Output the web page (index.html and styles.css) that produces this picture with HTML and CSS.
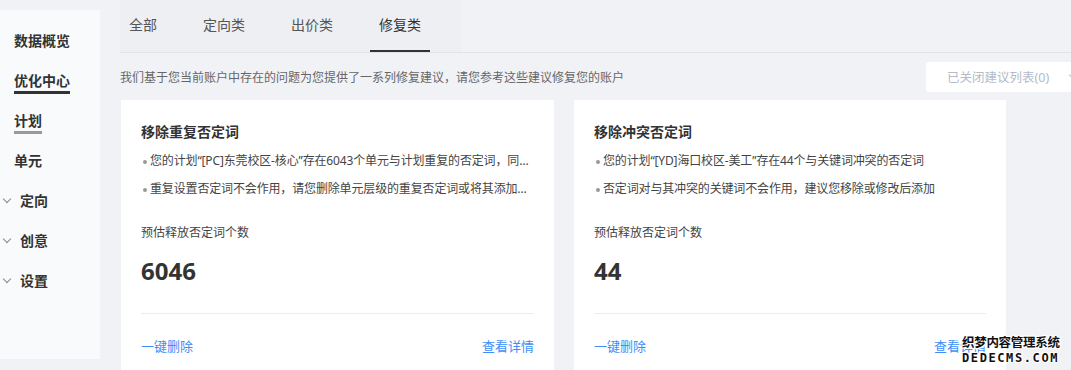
FILE: index.html
```html
<!DOCTYPE html>
<html lang="zh-CN">
<head>
    <meta charset="UTF-8">
    <meta name="viewport" content="width=device-width, initial-scale=1.0">
    <title>优化中心 - 修复类</title>
    <link rel="stylesheet" href="styles.css">
</head>
<body>
    <div class="page">
        <div class="sidebar">
            <div class="nav-item">数据概览</div>
            <div class="nav-item"><span class="mark mark-dark">优化中心</span></div>
            <div class="nav-item"><span class="mark mark-gray">计划</span></div>
            <div class="nav-item">单元</div>
            <div class="nav-item nav-fold"><span class="chev"></span>定向</div>
            <div class="nav-item nav-fold"><span class="chev"></span>创意</div>
            <div class="nav-item nav-fold"><span class="chev"></span>设置</div>
        </div>

        <div class="main">
            <div class="tab-bar">
                <div class="tabs">
                    <div class="tab">全部</div>
                    <div class="tab">定向类</div>
                    <div class="tab">出价类</div>
                    <div class="tab active">修复类</div>
                </div>
            </div>

            <div class="toolbar">
                <p class="desc">我们基于您当前账户中存在的问题为您提供了一系列修复建议，请您参考这些建议修复您的账户</p>
                <div class="closed-btn">已关闭建议列表(0)<span class="chev chev-light"></span></div>
            </div>

            <div class="cards">
                <div class="card">
                    <h3>移除重复否定词</h3>
                    <ul>
                        <li>您的计划“[PC]东莞校区-核心”存在6043个单元与计划重复的否定词，同时这些否定词将不会生效</li>
                        <li>重复设置否定词不会作用，请您删除单元层级的重复否定词或将其添加到计划层级</li>
                    </ul>
                    <div class="label">预估释放否定词个数</div>
                    <div class="count">6046</div>
                    <div class="card-foot">
                        <a href="#">一键删除</a>
                        <a href="#">查看详情</a>
                    </div>
                </div>
                <div class="card">
                    <h3>移除冲突否定词</h3>
                    <ul>
                        <li>您的计划“[YD]海口校区-美工”存在44个与关键词冲突的否定词</li>
                        <li>否定词对与其冲突的关键词不会作用，建议您移除或修改后添加</li>
                    </ul>
                    <div class="label">预估释放否定词个数</div>
                    <div class="count">44</div>
                    <div class="card-foot">
                        <a href="#">一键删除</a>
                        <a href="#">查看详情</a>
                    </div>
                </div>
            </div>
        </div>
    </div>

    <div class="watermark">
        <div class="wm-cn">织梦内容管理系统</div>
        <div class="wm-en">DEDECMS.COM</div>
    </div>
</body>
</html>
```

FILE: styles.css
```css
body {
    margin: 0;
    background-color: #f1f2f6;
    color: #333;
    font-family: "Noto Sans", "Noto Sans CJK SC", sans-serif;
    overflow: hidden;
}
.page {
    display: flex;
    align-items: flex-start;
    width: 1100px;
    height: 370px;
}
.sidebar {
    width: 100px;
    margin-top: 10px;
    padding-top: 11px;
    height: 349px;
    box-sizing: border-box;
    background-color: #f9fafc;
    flex-shrink: 0;
}
.nav-item {
    height: 40px;
    line-height: 40px;
    padding-left: 14px;
    font-size: 14px;
    font-weight: bold;
    color: #333;
}
.mark {
    display: inline-block;
    line-height: 20px;
    border-bottom: 3px solid #333;
}
.mark-gray {
    border-bottom-color: #999;
}
.nav-fold {
    display: flex;
    align-items: center;
    padding-left: 4px;
}
.chev {
    display: inline-block;
    width: 5px;
    height: 5px;
    border-right: 1px solid #888;
    border-bottom: 1px solid #888;
    transform: rotate(45deg);
    margin: -4px 10px 0 0;
}
.main {
    flex: 1;
    padding-left: 20px;
}
.tab-bar {
    height: 52px;
    border-bottom: 1px solid #e2e3e6;
}
.tabs {
    display: inline-flex;
    gap: 28px;
    height: 52px;
    padding-right: 31px;
    background-color: #eeeff3;
}
.tab {
    padding: 0 9px;
    line-height: 50px;
    font-size: 14px;
    color: #555;
    border-bottom: 2px solid transparent;
}
.tab.active {
    color: #333;
    border-bottom-color: #333;
}
.toolbar {
    display: flex;
    justify-content: space-between;
    align-items: center;
    height: 47px;
}
.desc {
    margin: 0;
    font-size: 12px;
    color: #666;
}
.closed-btn {
    display: flex;
    align-items: center;
    justify-content: space-between;
    width: 160px;
    height: 30px;
    margin-right: 14px;
    box-sizing: border-box;
    padding: 0 10px 0 21px;
    background-color: #fff;
    border-radius: 3px;
    font-size: 12.5px;
    color: #b3bac8;
}
.chev-light {
    border-color: #c0c4cc;
    margin: -4px 0 0 0;
}
.cards {
    display: grid;
    grid-template-columns: 433px 432px;
    gap: 20px;
    padding-left: 1px;
}
.card {
    background-color: #fff;
    padding: 22px 20px 20px;
    height: 300px;
}
.card h3 {
    margin: 0;
    font-size: 14px;
    line-height: 20px;
    font-weight: bold;
    color: #333;
}
.card ul {
    list-style: none;
    margin: 9px 0 0;
    padding: 0;
}
.card li {
    position: relative;
    padding-left: 9px;
    font-size: 12px;
    line-height: 20px;
    letter-spacing: -0.15px;
    color: #444;
    white-space: nowrap;
    overflow: hidden;
    text-overflow: ellipsis;
}
.card li + li {
    margin-top: 8px;
}
.card li::before {
    content: "";
    position: absolute;
    left: 2px;
    top: 9px;
    width: 4px;
    height: 4px;
    border-radius: 50%;
    background-color: #999;
}
.label {
    margin-top: 24px;
    font-size: 12px;
    line-height: 20px;
    color: #444;
}
.count {
    margin-top: 12px;
    font-size: 24px;
    line-height: 32px;
    font-weight: bold;
    color: #333;
}
.card-foot {
    display: flex;
    justify-content: space-between;
    margin-top: 26px;
    padding-top: 22px;
    border-top: 1px solid #ebecef;
    font-size: 13px;
    line-height: 20px;
}
.card-foot a {
    color: #3d8ef7;
    text-decoration: none;
}
.watermark {
    position: absolute;
    left: 962px;
    top: 333px;
    font-weight: bold;
    color: #111;
    text-shadow: 1px 0 #fff, -1px 0 #fff, 0 1px #fff, 0 -1px #fff, 1px 1px #fff, -1px -1px #fff, 1px -1px #fff, -1px 1px #fff;
}
.wm-cn {
    font-size: 12.5px;
    line-height: 19px;
    letter-spacing: -0.3px;
}
.wm-en {
    font-family: "DejaVu Sans Mono", monospace;
    font-size: 12px;
    line-height: 13px;
    letter-spacing: 1.6px;
}
```
